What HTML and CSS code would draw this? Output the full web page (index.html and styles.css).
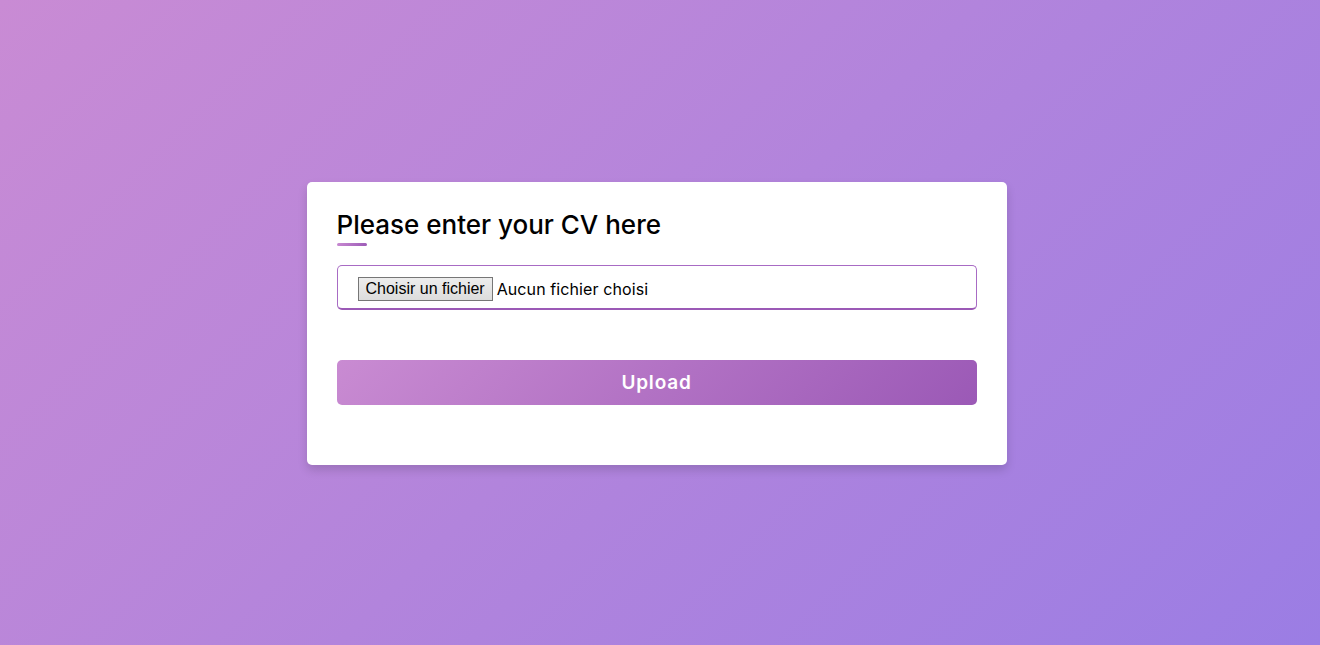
FILE: index.html
```html
<!DOCTYPE html>
<html lang="fr">
<head>
<meta charset="utf-8">
<title>Upload CV</title>
<link rel="stylesheet" href="styles.css">
</head>
<body>
<div class="page">
  <form class="card">
    <div class="title">Please enter your CV here</div>
    <label class="field">
      <input type="file" class="file-native">
      <span class="file-btn">Choisir un fichier</span>
      <span class="file-name">Aucun fichier choisi</span>
    </label>
    <button type="button" class="upload">Upload</button>
  </form>
</div>
</body>
</html>
```
FILE: styles.css
```css
* { box-sizing: border-box; }
html, body { margin: 0; padding: 0; }
body {
  height: 645px;
  font-family: "Inter", "Noto Sans", sans-serif;
  background: linear-gradient(135deg, #c98bd4 0%, #9b7de4 100%);
}
.page {
  height: 100%;
  display: flex;
  align-items: center;
  justify-content: center;
  padding-right: 7px;
}
.card {
  width: 700px;
  height: 283px;
  background: #fff;
  border-radius: 5px;
  box-shadow: 0 5px 10px rgba(0,0,0,0.15);
  padding: 27px 30px 60px;
  margin-top: 1px;
  display: flex;
  flex-direction: column;
}
.title {
  position: relative;
  font-size: 26px;
  font-weight: 500;
  color: #000;
  line-height: 32px;
}
.title::before {
  content: "";
  position: absolute;
  left: 0;
  bottom: -5px;
  width: 30px;
  height: 3px;
  border-radius: 2px;
  background: linear-gradient(135deg, #c98bd2, #9b59b6);
}
.field {
  margin-top: 24px;
  height: 45px;
  border: 1px solid #a86bc4;
  border-bottom: 2px solid #9b59b6;
  border-radius: 5px;
  display: flex;
  align-items: center;
  padding-left: 20px;
  padding-top: 5px;
  font-size: 16px;
  color: #000;
}
.file-native {
  display: none;
}
.file-btn {
  height: 24px;
  line-height: 22px;
  padding: 0 7px;
  border: 1px solid #767676;
  background: linear-gradient(#ededed, #dcdcdc);
  color: #000;
  font-family: "Liberation Sans", Arial, sans-serif;
}
.file-name {
  margin-left: 4px;
  font-family: "Inter", "Noto Sans", sans-serif;
  letter-spacing: 0.1px;
}
.upload {
  margin-top: 50px;
  height: 45px;
  border: none;
  border-radius: 5px;
  color: #fff;
  font-family: "Inter", "Noto Sans", sans-serif;
  font-size: 19px;
  font-weight: 600;
  letter-spacing: 0.8px;
  background: linear-gradient(135deg, #c98bd2, #9b59b6);
}
```
